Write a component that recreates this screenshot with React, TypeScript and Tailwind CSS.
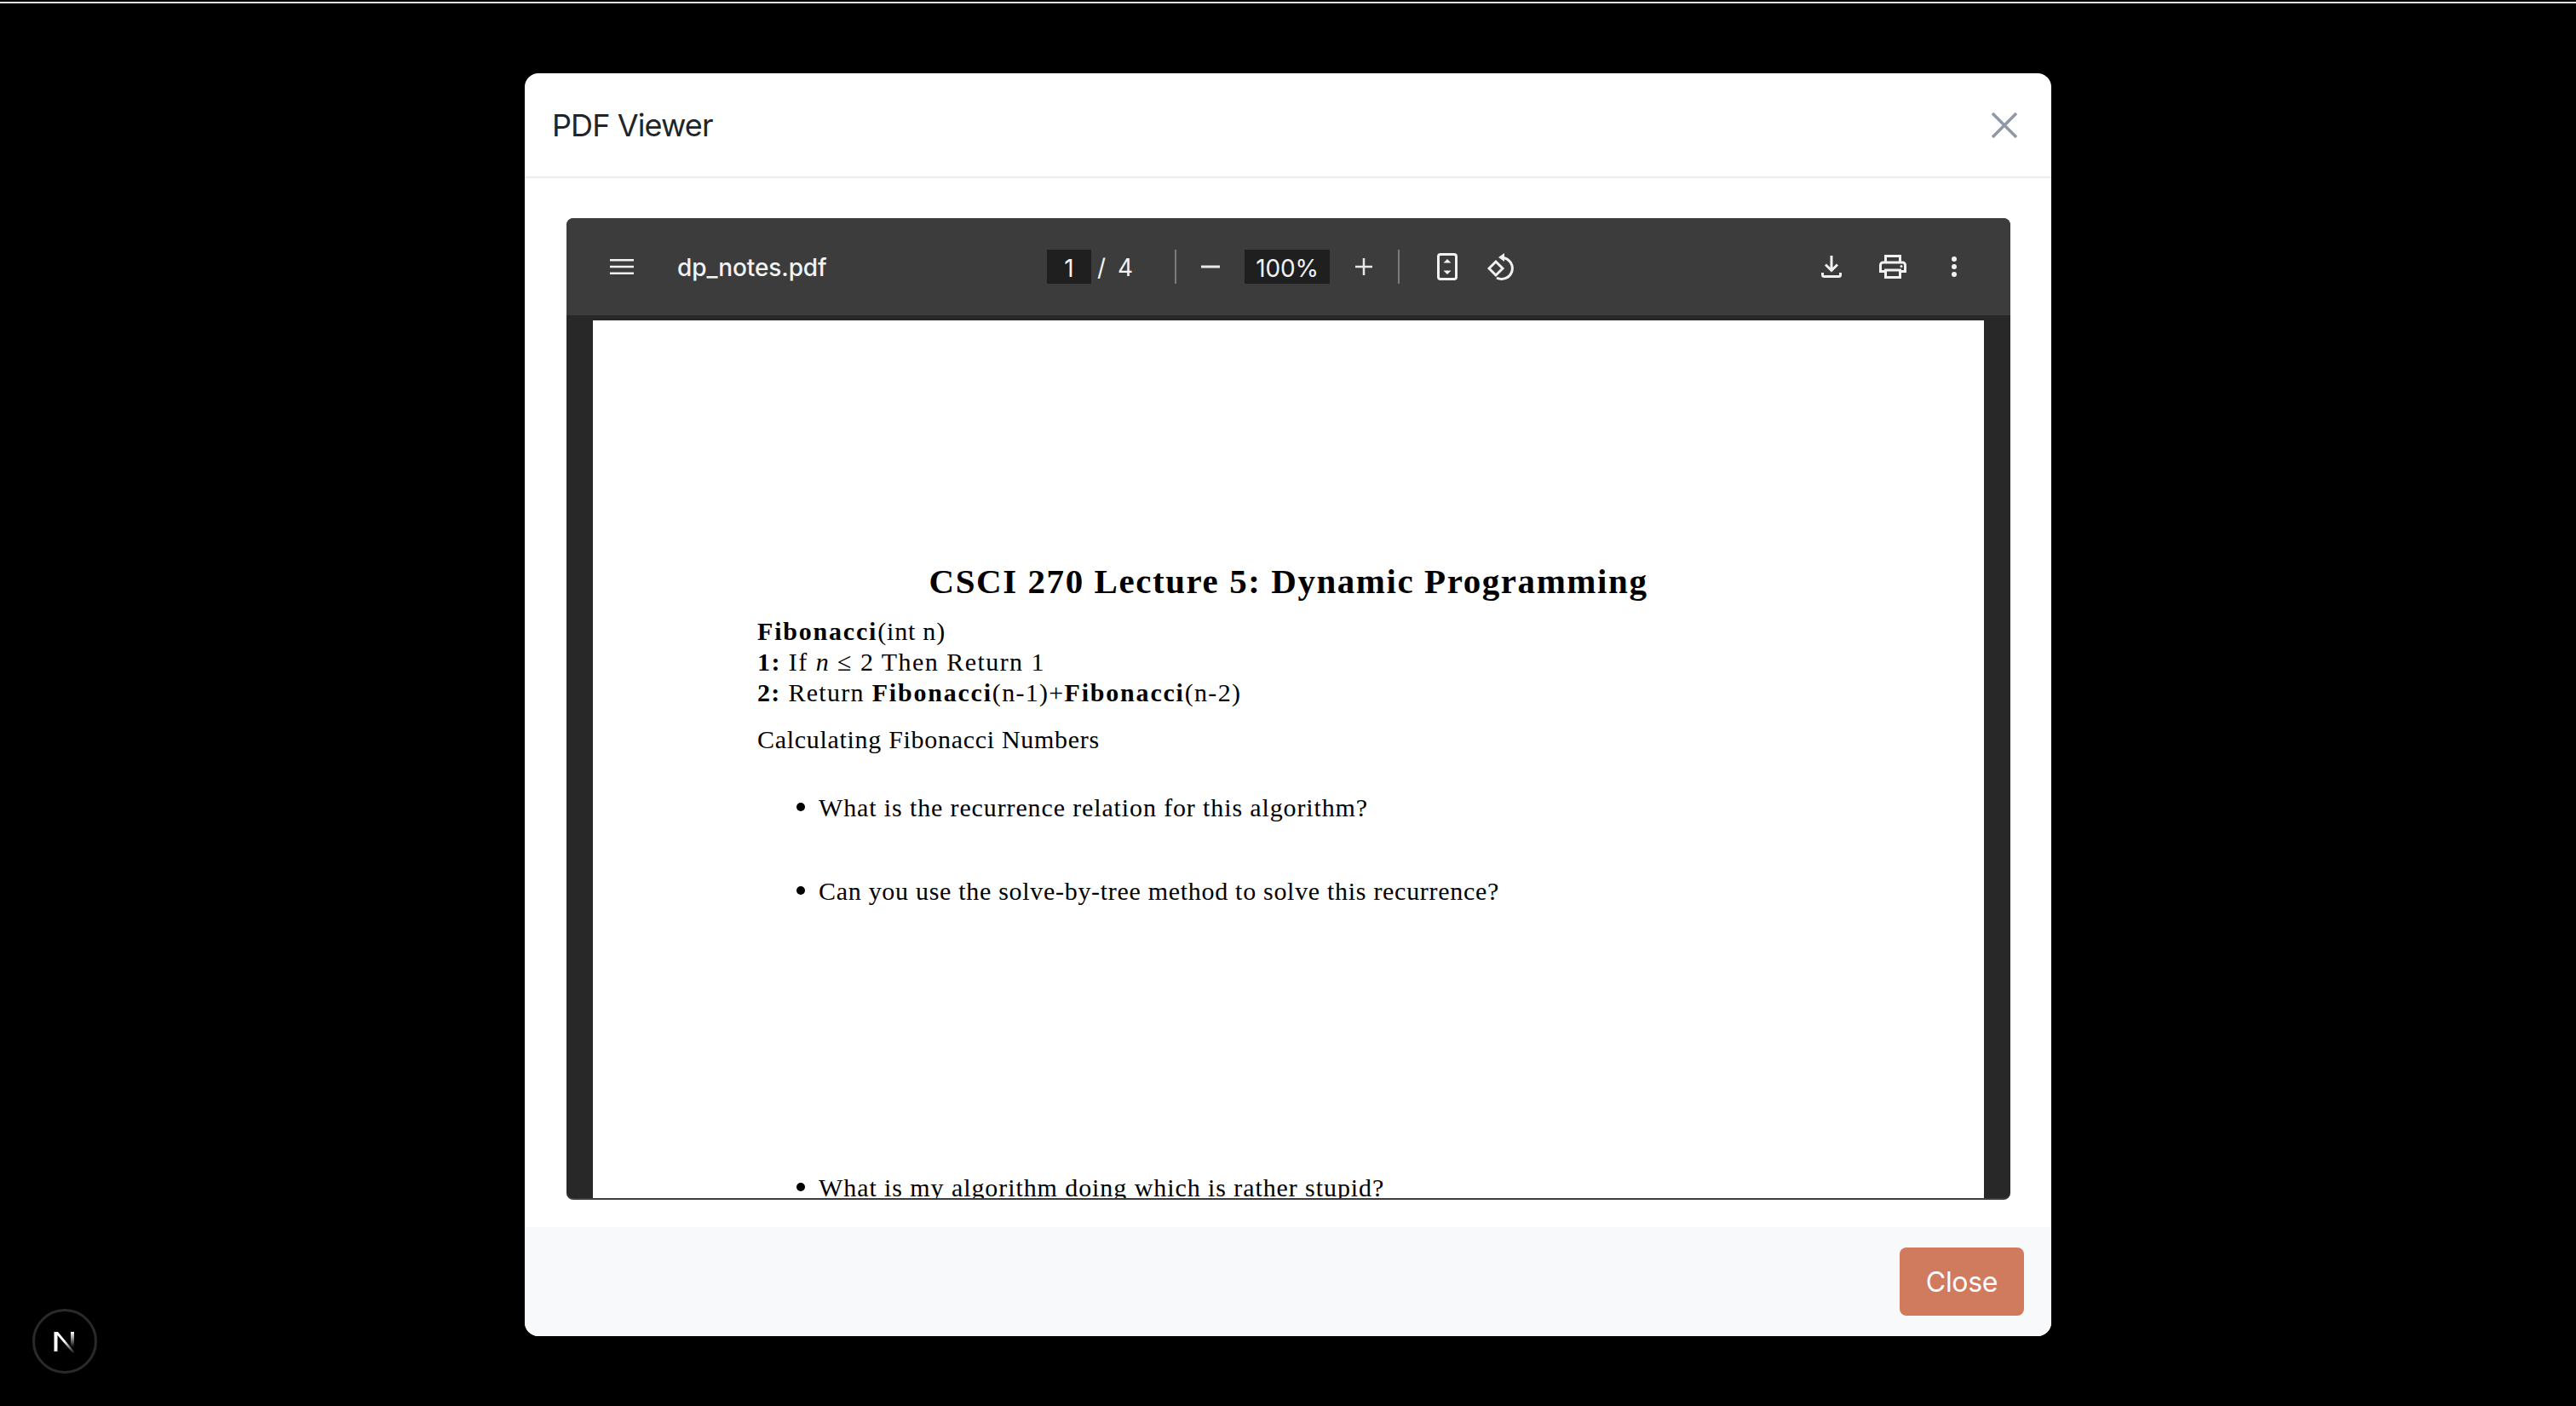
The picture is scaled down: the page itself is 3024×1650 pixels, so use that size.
import React from 'react';

const serif = "font-['Liberation_Serif',serif]";

const Bullet: React.FC<{ className: string; textClass: string; children: React.ReactNode }> = ({
  className,
  textClass,
  children,
}) => (
  <div className={`flex items-center ml-[46px] h-[36px] shrink-0 ${className}`}>
    <span className="w-[10px] h-[10px] rounded-full bg-black shrink-0" />
    <span className={`ml-[16px] whitespace-nowrap ${textClass}`}>{children}</span>
  </div>
);

const Toolbar: React.FC = () => (
  <div className="flex items-center h-[114px] bg-[#3c3c3c] pl-[51px] pr-[62px] text-[#f1f3f4] font-['Inter',sans-serif] rounded-t-[8px] shrink-0">
    <svg width="28" height="18" viewBox="0 0 28 18" fill="#f1f1f1" className="shrink-0">
      <rect y="0" width="28" height="2.5" />
      <rect y="7.75" width="28" height="2.5" />
      <rect y="15.5" width="28" height="2.5" />
    </svg>
    <div className="ml-[51px] w-[434px] shrink-0 pt-[2px] text-[28px] font-medium whitespace-nowrap leading-[40px] tracking-[-0.1px]">dp_notes.pdf</div>
    <div className="w-[52px] h-[40px] pt-[4px] bg-[#1f1f1f] flex items-center justify-center text-[28px] shrink-0">1</div>
    <div className="w-[98px] flex shrink-0 pt-[2px] text-[28px] leading-[40px]">
      <span className="ml-[7px]">/</span>
      <span className="ml-[14px]">4</span>
    </div>
    <div className="w-[2px] h-[40px] bg-[#7b7b7b] shrink-0" />
    <svg width="22" height="4" viewBox="0 0 22 4" className="ml-[29px] shrink-0">
      <rect width="22" height="3" y="0.5" fill="#e8e8e8" />
    </svg>
    <div className="ml-[29px] w-[100px] h-[40px] pt-[4px] bg-[#1f1f1f] flex items-center justify-center text-[28px] tracking-[-0.2px] shrink-0">100%</div>
    <svg width="20" height="20" viewBox="0 0 20 20" fill="#e8e8e8" className="ml-[30px] shrink-0">
      <rect x="8.75" width="2.5" height="20" />
      <rect y="8.75" width="20" height="2.5" />
    </svg>
    <div className="ml-[30px] w-[2px] h-[40px] bg-[#7b7b7b] shrink-0" />
    <svg width="24" height="32" viewBox="0 0 24 32" fill="none" className="ml-[44px] shrink-0">
      <rect x="1.5" y="1.5" width="21" height="29" rx="2.5" stroke="#f1f1f1" strokeWidth="3" />
      <path d="M12 7l4.5 4.5h-9zM12 25l-4.500-4.500h9z" fill="#f1f1f1" />
    </svg>
    <svg width="34" height="34" viewBox="0 0 34 34" fill="none" className="ml-[35px] shrink-0">
      <path d="M2 19l8-8 8 8-8 8z" stroke="#f1f1f1" strokeWidth="3" />
      <path d="M18 6.500A12.500 12.500 0 1 1 11 30" stroke="#f1f1f1" strokeWidth="3" />
      <path d="M13 6l7-5v10z" fill="#f1f1f1" />
    </svg>
    <svg width="24" height="26" viewBox="0 0 24 26" fill="none" className="ml-auto shrink-0" stroke="#f1f1f1" strokeWidth="3">
      <path d="M12 0v17M5 10.500l7 7 7-7" />
      <path d="M1.500 20v2.500a2 2 0 0 0 2 2h17a2 2 0 0 0 2-2V20" />
    </svg>
    <svg width="32" height="28" viewBox="0 0 32 28" fill="none" className="ml-[44px] shrink-0" stroke="#f1f1f1" strokeWidth="3">
      <path d="M7.500 9V1.500h17V9" />
      <path d="M7 19.500H1.500V12a3 3 0 0 1 3-3h23a3 3 0 0 1 3 3v7.500H25" />
      <rect x="7.500" y="18" width="17" height="8.500" />
      <circle cx="26" cy="13.500" r="1.500" fill="#f1f1f1" stroke="none" />
    </svg>
    <svg width="8" height="26" viewBox="0 0 8 26" fill="#f1f1f1" className="ml-[52px] shrink-0">
      <circle cx="4" cy="4" r="3" />
      <circle cx="4" cy="13" r="3" />
      <circle cx="4" cy="22" r="3" />
    </svg>
  </div>
);

const PdfPage: React.FC = () => (
  <div className={`flex-1 min-h-0 mx-[31px] bg-white overflow-hidden text-black flex flex-col pt-[282px] pl-[193px] ${serif}`}>
    <h1 className="-ml-[193px] text-center text-[41px] leading-[48px] font-bold tracking-[1.56px] whitespace-nowrap shrink-0">
      CSCI 270 Lecture 5: Dynamic Programming
    </h1>
    <div className="mt-[17px] text-[30px] leading-[36px] whitespace-nowrap shrink-0 tracking-[0.8px]">
      <b className="tracking-[1.8px]">Fibonacci</b>(int n)
    </div>
    <div className="text-[30px] leading-[36px] whitespace-nowrap shrink-0 tracking-[1.45px]">
      <b>1:</b> If <i>n</i> ≤ 2 Then Return 1
    </div>
    <div className="text-[30px] leading-[36px] whitespace-nowrap shrink-0 tracking-[1.3px]">
      <b>2:</b> Return <b className="tracking-[1.8px]">Fibonacci</b>(n-1)+<b className="tracking-[1.8px]">Fibonacci</b>(n-2)
    </div>
    <div className="mt-[19px] text-[30px] leading-[36px] whitespace-nowrap shrink-0 tracking-[0.7px]">Calculating Fibonacci Numbers</div>
    <Bullet className="mt-[43px]" textClass="text-[30px] tracking-[0.87px]">What is the recurrence relation for this algorithm?</Bullet>
    <Bullet className="mt-[62px]" textClass="text-[30px] tracking-[0.7px]">Can you use the solve-by-tree method to solve this recurrence?</Bullet>
    <Bullet className="mt-[312px]" textClass="text-[30px] tracking-[0.92px]">What is my algorithm doing which is rather stupid?</Bullet>
  </div>
);

const App: React.FC = () => {
  return (
    <div className="relative h-[1650px] bg-black overflow-hidden pt-[2px] flex flex-col font-['Inter',sans-serif]">
      <div className="h-[2px] bg-[#e0e0e0] shrink-0" />
      <div className="w-[1792px] h-[1482px] mx-auto mt-[82px] bg-white rounded-[16px] overflow-hidden flex flex-col shrink-0">
        <div className="h-[123px] shrink-0 border-b-2 border-[#e9ecef] pl-[32px] pr-[40px] flex items-center justify-between">
          <div className="text-[36px] text-[#212529] tracking-[-0.9px]">PDF Viewer</div>
          <svg width="30" height="30" viewBox="0 0 30 30" fill="none" stroke="#8f98a3" strokeWidth="3.500">
            <path d="M1 1l28 28M29 1L1 29" />
          </svg>
        </div>
        <div className="flex-1 min-h-0 pl-[49px] pr-[48px] pt-[47px] pb-[32px] flex">
          <div className="flex-1 min-w-0 bg-[#282828] rounded-[8px] overflow-hidden flex flex-col border-b-2 border-[#3c3c3c]">
            <Toolbar />
            <div className="h-[6px] shrink-0" />
            <PdfPage />
          </div>
        </div>
        <div className="h-[128px] shrink-0 bg-[#f8f9fa] flex items-center justify-end pr-[32px]">
          <button className="w-[146px] h-[80px] pt-[2px] rounded-[8px] bg-[#d07a5e] text-white text-[32px] tracking-[-0.3px]">Close</button>
        </div>
      </div>
      <div className="absolute left-[38px] top-[1536px] w-[76px] h-[76px] rounded-full bg-black border-[3px] border-[#2a2a2a] flex items-center justify-center">
        <svg width="30" height="30" viewBox="0 0 30 30" fill="none">
          <defs>
            <linearGradient id="nA" gradientUnits="userSpaceOnUse" x1="14" y1="15" x2="27" y2="29">
              <stop offset="0" stopColor="#fff" />
              <stop offset="1" stopColor="#fff" stopOpacity="0" />
            </linearGradient>
            <linearGradient id="nB" x1="0" y1="0" x2="0" y2="1">
              <stop offset="0" stopColor="#fff" />
              <stop offset="1" stopColor="#fff" stopOpacity="0" />
            </linearGradient>
          </defs>
          <path d="M2.500 4H7l20 24-2 1.500L6.500 8v19h-4z" fill="url(#nA)" />
          <rect x="22" y="4" width="4" height="18" fill="url(#nB)" />
        </svg>
      </div>
    </div>
  );
};

export default App;
